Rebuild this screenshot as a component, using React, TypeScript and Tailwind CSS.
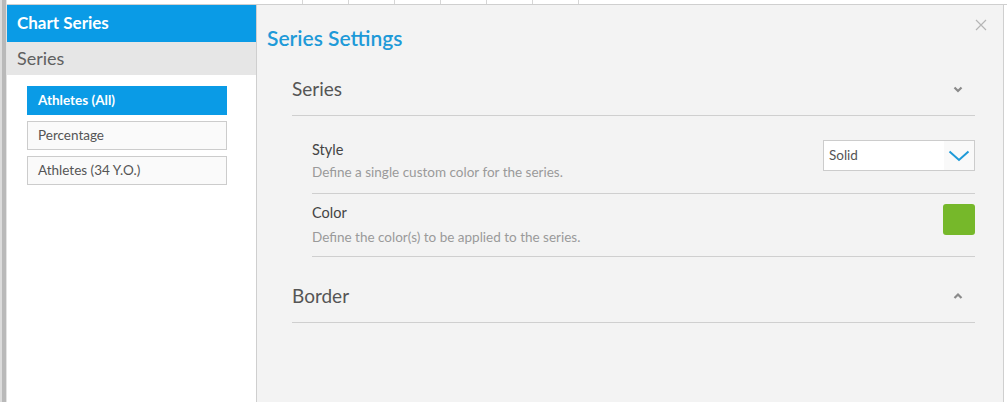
import React from "react";

const font = { fontFamily: "Lato, 'Open Sans', sans-serif" };

function ChevronSmall({ up }: { up?: boolean }) {
  return (
    <svg width="10" height="8" viewBox="0 0 10 8" className="text-[#8a8a8a]">
      {up ? (
        <path d="M1.5 6 L5 2.5 L8.5 6" fill="none" stroke="currentColor" strokeWidth="2.2" />
      ) : (
        <path d="M1.5 2.5 L5 6 L8.5 2.5" fill="none" stroke="currentColor" strokeWidth="2.2" />
      )}
    </svg>
  );
}

export default function App() {
  const tabs = [0, 1, 2, 3, 4, 5, 6];
  return (
    <div className="w-[1007px] h-[402px] bg-white flex overflow-hidden" style={font}>
      <div className="w-[7px] h-full flex">
        <div className="w-[2px] bg-[#dcdcdc]" />
        <div className="w-[4px] bg-[#b9b9b9]" />
        <div className="w-[1px] bg-[#e3e3e3]" />
      </div>
      <div className="flex-1 flex flex-col">
        <div className="h-[5px] flex border-b border-[#cfcfcf] box-border">
          <div className="w-[250px]" />
          {tabs.map((t) => (
            <div key={t} className="w-[46px] border-r border-[#d6d6d6]" />
          ))}
        </div>
        <div className="flex-1 flex">
          <div className="w-[250px] bg-white border-r border-[#cfcfcf] flex flex-col">
            <div className="h-[37px] bg-[#0a9be6] flex items-center pl-[10px] pb-[2px] text-white font-bold text-[17px]">
              Chart Series
            </div>
            <div className="h-[33px] bg-[#e6e6e6] flex items-center pl-[10px] text-[#606060] text-[18px]">
              Series
            </div>
            <div className="pl-[20px] pt-[11px] flex flex-col gap-[6px]">
              <div className="w-[200px] h-[29px] bg-[#0a9be6] flex items-center pl-[11px] text-white font-bold text-[13.5px]">
                Athletes (All)
              </div>
              <div className="w-[200px] h-[29px] bg-[#fafafa] border border-[#cccccc] flex items-center pl-[10px] text-[#555] text-[13.5px]">
                Percentage
              </div>
              <div className="w-[200px] h-[29px] bg-[#fafafa] border border-[#cccccc] flex items-center pl-[10px] text-[#555] text-[13.5px]">
                Athletes (34 Y.O.)
              </div>
            </div>
          </div>
          <div className="w-[747px] bg-[#f3f3f3] border-r border-[#cfcfcf] relative flex flex-col">
            <button className="absolute right-[16px] top-[14px] text-[#b5b5b5]">
              <svg width="12" height="12" viewBox="0 0 12 12">
                <path d="M1 1 L11 11 M11 1 L1 11" stroke="currentColor" strokeWidth="1.2" />
              </svg>
            </button>
            <div className="pl-[10px] pt-[20px] text-[#1e9ad8] text-[21px] font-semibold leading-[26px]">
              Series Settings
            </div>
            <div className="pl-[35px] pr-[28px] pt-[24px]">
              <div className="h-[41px] border-b border-[#cfcfcf] flex items-center justify-between pb-[12px]">
                <span className="text-[#555] text-[19px]">Series</span>
                <span className="mr-[12px]"><ChevronSmall /></span>
              </div>
              <div className="pl-[20px]">
                <div className="h-[78px] border-b border-[#cfcfcf] flex items-center justify-between">
                  <div className="flex flex-col pt-[14px]">
                    <span className="text-[#444] text-[14.5px] leading-[20px]">Style</span>
                    <span className="text-[#9a9a9a] text-[13.5px] leading-[24px]">Define a single custom color for the series.</span>
                  </div>
                  <div className="w-[152px] h-[31px] bg-white border border-[#cccccc] flex items-center justify-between pl-[5px] mt-[2px]">
                    <span className="text-[#555] text-[13.5px]">Solid</span>
                    <div className="h-full w-[30px] bg-[#f9f9f9] flex items-center justify-center">
                      <svg width="22" height="12" viewBox="0 0 22 12">
                        <path d="M1.5 1.5 L11 10 L20.5 1.5" fill="none" stroke="#1e9ad8" strokeWidth="2" />
                      </svg>
                    </div>
                  </div>
                </div>
                <div className="h-[63px] border-b border-[#cfcfcf] flex justify-between">
                  <div className="flex flex-col pt-[9px]">
                    <span className="text-[#444] text-[14.5px] leading-[20px]">Color</span>
                    <span className="text-[#9a9a9a] text-[13.5px] leading-[28px]">Define the color(s) to be applied to the series.</span>
                  </div>
                  <div className="w-[32px] h-[31px] rounded-[3px] bg-[#76b82a] mt-[10px]" />
                </div>
              </div>
              <div className="h-[66px] border-b border-[#cfcfcf] flex items-center justify-between pt-[13px]">
                <span className="text-[#555] text-[19px]">Border</span>
                <span className="mr-[12px]"><ChevronSmall up /></span>
              </div>
            </div>
          </div>
          <div className="w-[3px]" />
        </div>
      </div>
    </div>
  );
}
